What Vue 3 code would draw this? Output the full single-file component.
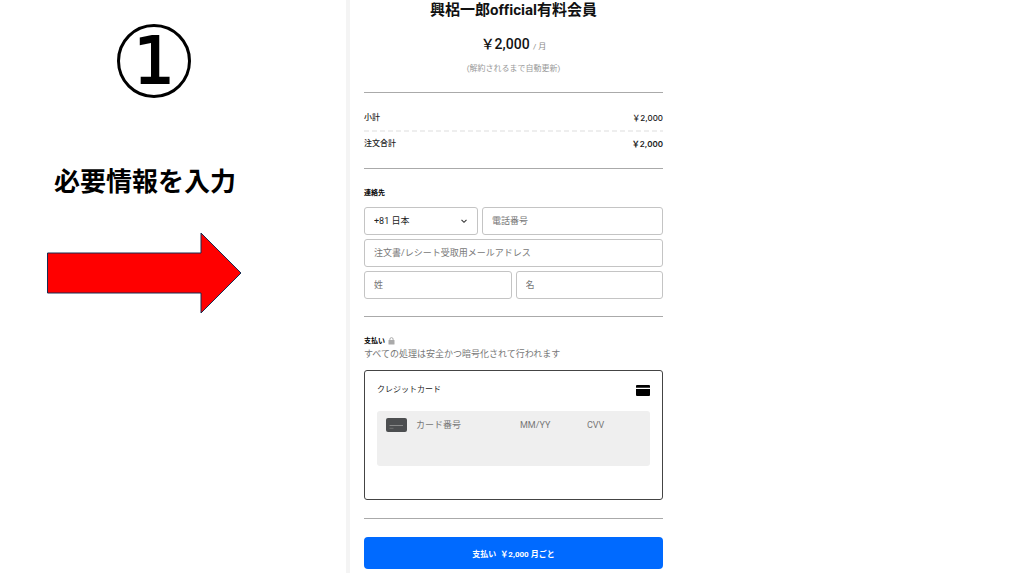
<script setup>
import { ref } from 'vue'

const country = ref('+81 日本')
const phone = ref('')
const email = ref('')
const lastName = ref('')
const firstName = ref('')
const cardNumber = ref('')
const expiry = ref('')
const cvv = ref('')

const totals = [
  { label: '小計', amount: '￥2,000', strong: false },
  { label: '注文合計', amount: '￥2,000', strong: true },
]
</script>

<template>
  <div class="page">
    <aside class="guide">
      <div class="step">1</div>
      <h2 class="instruction">必要情報を入力</h2>
      <svg class="arrow" viewBox="0 0 196 82" aria-hidden="true">
        <path d="M0.5 21H154V1L194 41L154 81V61H0.5Z" fill="#ff0000" stroke="#172c51" stroke-width="1" />
      </svg>
    </aside>

    <main class="checkout">
      <header class="plan">
        <h1>興梠一郎official有料会員</h1>
        <p class="price">￥2,000 <small>/ 月</small></p>
        <p class="renewal">(解約されるまで自動更新)</p>
      </header>

      <dl class="totals">
        <div v-for="row in totals" :key="row.label" class="total-row">
          <dt>{{ row.label }}</dt>
          <dd :class="{ strong: row.strong }">{{ row.amount }}</dd>
        </div>
      </dl>

      <form @submit.prevent>
        <section class="contact">
          <h3>連絡先</h3>
          <div class="fields">
            <div class="phone-row">
              <div class="select-wrap">
                <select v-model="country" class="field" aria-label="国番号">
                  <option>+81 日本</option>
                </select>
                <svg class="chevron" viewBox="0 0 8 8" aria-hidden="true">
                  <path d="M1.5 2.8L4 5.3L6.5 2.8" fill="none" stroke="#333" stroke-width="1.1" />
                </svg>
              </div>
              <input v-model="phone" class="field" type="tel" placeholder="電話番号" aria-label="電話番号">
            </div>
            <input v-model="email" class="field" type="email" placeholder="注文書/レシート受取用メールアドレス" aria-label="注文書/レシート受取用メールアドレス">
            <div class="name-row">
              <input v-model="lastName" class="field" type="text" placeholder="姓" aria-label="姓">
              <input v-model="firstName" class="field" type="text" placeholder="名" aria-label="名">
            </div>
          </div>
        </section>

        <section class="payment">
          <h3>
            支払い
            <svg class="lock" viewBox="0 0 7 8" aria-hidden="true">
              <path d="M1.9 3.5V2.2A1.6 1.6 0 0 1 5.1 2.2V3.5" fill="none" stroke="#aaa" stroke-width="1" />
              <rect x="0.5" y="3" width="6" height="4.5" rx="0.5" fill="#aaa" />
            </svg>
          </h3>
          <p class="note">すべての処理は安全かつ暗号化されて行われます</p>
          <div class="method">
            <div class="method-head">
              <span>クレジットカード</span>
              <svg class="card-solid" viewBox="0 0 14 11" aria-hidden="true">
                <path d="M1 0H13Q14 0 14 1V2.7H0V1Q0 0 1 0Z" />
                <path d="M0 4H14V10Q14 11 13 11H1Q0 11 0 10Z" />
              </svg>
            </div>
            <div class="card-entry">
              <svg class="card-dark" viewBox="0 0 21 14" aria-hidden="true">
                <rect width="21" height="14" rx="2" fill="#4c4e50" />
                <path d="M3.5 7.5H17" stroke="#999" stroke-width="0.8" />
                <path d="M3.5 10.3H7.5" stroke="#808080" stroke-width="0.7" />
              </svg>
              <input v-model="cardNumber" type="text" placeholder="カード番号" aria-label="カード番号">
              <input v-model="expiry" type="text" placeholder="MM/YY" aria-label="有効期限">
              <input v-model="cvv" type="text" placeholder="CVV" aria-label="CVV">
            </div>
          </div>
        </section>

        <button class="pay" type="submit"><span>支払い</span><span>￥2,000 月ごと</span></button>
      </form>
    </main>
  </div>
</template>

<style>
body {
  margin: 0;
  background: #fff;
}
</style>

<style scoped>
* {
  box-sizing: border-box;
}

h1, h2, h3, p, dl, dd {
  margin: 0;
}

.page {
  display: grid;
  grid-template-columns: 346fr 317fr 361fr;
  min-height: 100vh;
  font-family: Roboto, "Noto Sans CJK JP", sans-serif;
  font-size: 8px;
  line-height: 12px;
  color: #222;
}

.guide {
  display: flex;
  flex-direction: column;
  align-items: flex-start;
  padding: 24px 0 0 47px;
  font-family: "Noto Sans CJK JP", sans-serif;
  color: #000;
}

.step {
  display: flex;
  align-items: center;
  justify-content: center;
  width: 74px;
  height: 74px;
  margin-left: 70px;
  border: 3px solid #000;
  border-radius: 50%;
  font-family: "DejaVu Sans", sans-serif;
  font-size: 64px;
  line-height: 68px;
  -webkit-text-stroke: 2px #000;
}

.instruction {
  margin: 63px 0 0 7px;
  font-size: 26px;
  font-weight: 700;
  line-height: 38px;
}

.arrow {
  width: 196px;
  height: 82px;
  margin-top: 33px;
}

.checkout {
  padding-left: 14px;
  border-left: 4px solid #f4f4f4;
}

.plan {
  padding-bottom: 17px;
  text-align: center;
}

h1 {
  font-size: 15px;
  font-weight: 700;
  font-variant-ligatures: none;
  line-height: 20px;
  color: #111;
}

.price {
  margin-top: 14px;
  font-size: 14px;
  font-weight: 500;
  line-height: 20px;
  color: #111;
}

.price small {
  font-size: 8px;
  font-weight: 400;
  color: #888;
}

.renewal {
  margin-top: 6px;
  color: #999;
}

.totals {
  padding: 19px 0 18px;
  border-top: 1px solid #aaa;
}

.total-row {
  display: flex;
  justify-content: space-between;
  font-weight: 500;
}

.total-row dd {
  font-family: Inter, "Noto Sans CJK JP", sans-serif;
}

.total-row + .total-row {
  margin-top: 6px;
  padding-top: 8px;
  background: repeating-linear-gradient(90deg, #eee 0 5px, transparent 5px 8px) top / 100% 2px no-repeat;
}

.total-row .strong {
  font-weight: 600;
}

.contact,
.payment {
  padding: 18px 0;
  border-top: 1px solid #aaa;
}

.contact {
  padding-bottom: 17px;
}

h3 {
  display: flex;
  align-items: center;
  gap: 3px;
  font-size: 7px;
  font-weight: 700;
  line-height: 12px;
  color: #000;
}

.fields {
  display: grid;
  gap: 4px;
  margin-top: 8px;
}

.phone-row,
.name-row {
  display: grid;
  gap: 4px;
}

.phone-row {
  grid-template-columns: 114fr 181fr;
}

.name-row {
  grid-template-columns: 1fr 1fr;
}

.select-wrap {
  position: relative;
}

input,
select {
  width: 100%;
  min-width: 0;
  margin: 0;
  border: 0;
  outline: 0;
  background: transparent;
  color: #222;
  font-family: inherit;
  font-size: 9px;
}

input::placeholder {
  color: #777;
  opacity: 1;
}

.field {
  height: 28px;
  padding: 0 9px;
  border: 1px solid #c4c4c4;
  border-radius: 3px;
  background: #fff;
}

select.field {
  display: block;
  appearance: none;
}

.chevron {
  position: absolute;
  top: 10px;
  right: 10px;
  width: 8px;
  height: 8px;
  pointer-events: none;
}

.lock {
  width: 7px;
  height: 8px;
}

.note {
  margin-top: 1px;
  font-size: 9px;
  color: #777;
}

.method {
  margin-top: 10px;
  padding: 13px 12px 33px;
  border: 1px solid #444;
  border-radius: 3px;
}

.method-head {
  display: flex;
  align-items: center;
  justify-content: space-between;
}

.card-solid {
  width: 14px;
  height: 11px;
}

.card-entry {
  display: grid;
  grid-template-columns: 21px 95fr 58fr 63fr;
  align-items: start;
  column-gap: 9px;
  height: 55px;
  margin-top: 15px;
  padding: 7px 0 0 9px;
  border-radius: 3px;
  background: #efefef;
}

.card-entry input {
  height: 14px;
  padding: 0;
}

.card-dark {
  width: 21px;
  height: 14px;
}

.pay {
  display: flex;
  align-items: center;
  justify-content: center;
  gap: 4px;
  width: 100%;
  height: 32px;
  padding: 0;
  border: 0;
  border-radius: 4px;
  background: #006aff;
  color: #fff;
  font-family: inherit;
  font-size: 8px;
  font-weight: 700;
}

form {
  display: flow-root;
}

.payment {
  border-bottom: 1px solid #aaa;
  margin-bottom: 18px;
}
</style>
